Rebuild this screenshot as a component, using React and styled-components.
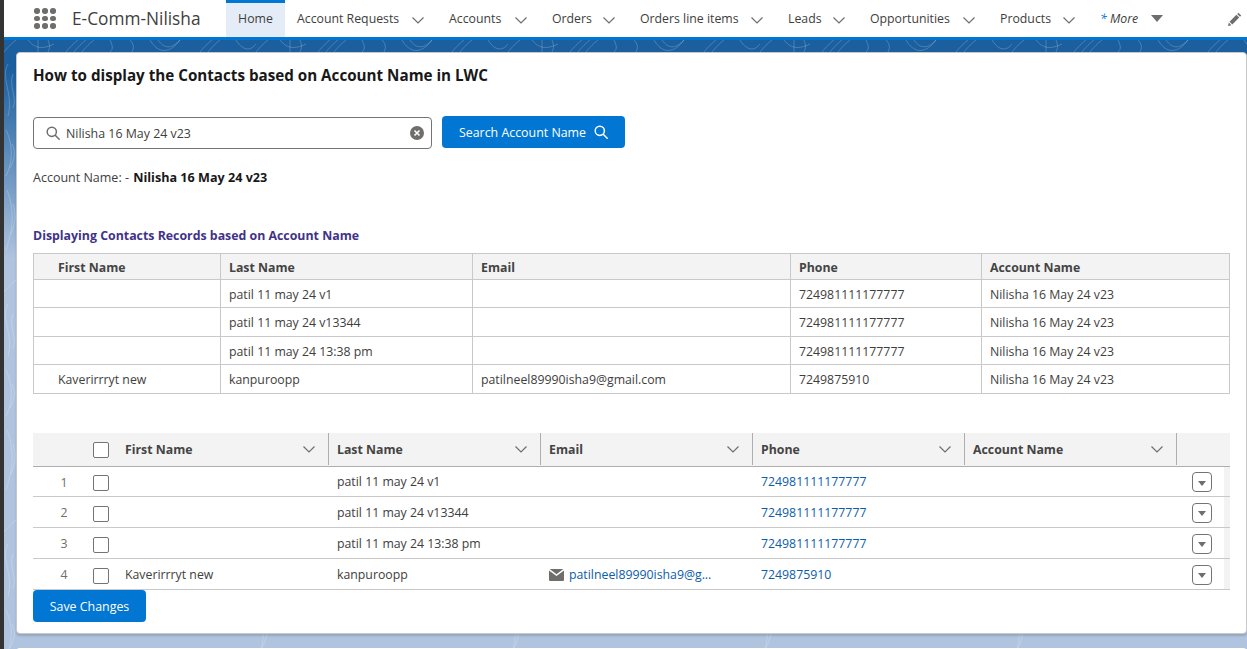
import React from 'react'
import styled, { createGlobalStyle } from 'styled-components'

const GlobalStyle = createGlobalStyle`
  html, body {
    margin: 0;
    height: 100%;
    overflow: hidden;
    background: #333;
  }
  body {
    font-family: "Open Sans", "Noto Sans", sans-serif;
    font-size: 12px;
    color: #3e3e3c;
  }
  * { box-sizing: border-box; }
`

const navItems = [
  { label: 'Account Requests', width: 152 },
  { label: 'Accounts', width: 103 },
  { label: 'Orders', width: 88 },
  { label: 'Orders line items', width: 148 },
  { label: 'Leads', width: 82 },
  { label: 'Opportunities', width: 130 },
  { label: 'Products', width: 100 },
]

const plainRows = [
  { first: '', last: 'patil 11 may 24 v1', email: '', phone: '724981111177777' },
  { first: '', last: 'patil 11 may 24 v13344', email: '', phone: '724981111177777' },
  { first: '', last: 'patil 11 may 24 13:38 pm', email: '', phone: '724981111177777' },
  { first: 'Kaverirrryt new', last: 'kanpuroopp', email: 'patilneel89990isha9@gmail.com', phone: '7249875910' },
]

const Chevron = ({ size = 14 }) => (
  <svg width={size} height={size} viewBox="0 0 14 14" fill="none" stroke="#706e6b" strokeWidth="1.2">
    <path d="M1.5 4.5 7 10l5.5-5.5" />
  </svg>
)

const SearchIcon = ({ color = '#706e6b' }) => (
  <svg width="14" height="14" viewBox="0 0 14 14" fill="none" stroke={color} strokeWidth="1.5">
    <circle cx="5.8" cy="5.8" r="4.6" />
    <path d="m9.2 9.2 4 4" strokeLinecap="round" />
  </svg>
)

const ClearIcon = () => (
  <svg width="14" height="14" viewBox="0 0 14 14">
    <circle cx="7" cy="7" r="7" fill="#706e6b" />
    <path d="m4.5 4.5 5 5m0-5-5 5" stroke="#fff" strokeWidth="1.6" />
  </svg>
)

const MailIcon = () => (
  <svg width="15" height="12" viewBox="0 0 15 12">
    <path d="M0 1.6 7.5 7 15 1.6V11a1 1 0 0 1-1 1H1a1 1 0 0 1-1-1z" fill="#706e6b" />
    <path d="M.6 0h13.8L7.5 5.2z" fill="#706e6b" />
  </svg>
)

const PencilIcon = () => (
  <svg width="14" height="14" viewBox="0 0 14 14" fill="#706e6b">
    <path d="M10.4.8 13.2 3.6 12 4.8 9.2 2zM8.4 2.8l2.8 2.8-6.9 6.9-2.8-2.8zM.8 10.6l2.6 2.6-3.4.8z" />
  </svg>
)

// topographic lines behind the page
const Contours = () => (
  <Backdrop width="100%" height="100%">
    <defs>
      <pattern id="contours" width="252" height="240" patternUnits="userSpaceOnUse">
        <g fill="none" stroke="#fff" strokeOpacity="0.2" strokeWidth="1">
          <path d="M0 12c4-5 8-9 12-12M24 0c6 8 14 10 26 4M34 0v12M44 0c2 5 2 8 0 12M62 12c4-5 8-9 12-12M70 12c4-5 8-9 12-12M78 12c4-5 8-9 12-12" />
          <path d="M106 0c4 8 2 10 0 12M126 0c4 4 4 8 2 12M146 0c8 14 20 14 30 0M154 0c6 9 14 9 22 0" />
          <path d="M196 12c4-5 8-9 12-12M204 12c4-5 8-9 12-12M232 0c6 10 14 12 20 4" />
          <path d="M4 24c-8 14 6 30 0 52M9 34c-5 12 5 24 0 34M2 90c6 12 8 30 0 46M8 104c4 8 3 14-2 24M3 150c6 16 8 34-1 60M9 164c3 10 3 18-2 30" />
        </g>
      </pattern>
    </defs>
    <rect width="100%" height="100%" fill="url(#contours)" />
  </Backdrop>
)

const App = () => {
  return (
    <>
      <GlobalStyle />
      <Shell>
        <Nav>
          <AppLauncher>
            {Array.from({ length: 9 }, (_, i) => <i key={i} />)}
          </AppLauncher>
          <AppName>E-Comm-Nilisha</AppName>
          <HomeTab>Home</HomeTab>
          {navItems.map((item) => (
            <NavItem key={item.label} $width={item.width}>
              {item.label}
              <Chevron />
            </NavItem>
          ))}
          <MoreItem>
            <em><b>*</b> More</em>
            <Caret />
          </MoreItem>
          <EditButton><PencilIcon /></EditButton>
        </Nav>
        <Page>
          <Contours />
          <Card>
            <Title>How to display the Contacts based on Account Name in LWC</Title>
            <SearchRow>
              <SearchBox>
                <SearchIcon />
                <SearchValue>Nilisha 16 May 24 v23</SearchValue>
                <ClearIcon />
              </SearchBox>
              <BrandButton>
                Search Account Name
                <SearchIcon color="#fff" />
              </BrandButton>
            </SearchRow>
            <AccountLine>Account Name: - <strong>Nilisha 16 May 24 v23</strong></AccountLine>
            <SectionTitle>Displaying Contacts Records based on Account Name</SectionTitle>
            <PlainTable>
              <colgroup>
                <col width="187" />
                <col width="252" />
                <col width="318" />
                <col width="191" />
                <col />
              </colgroup>
              <thead>
                <tr>
                  <th>First Name</th>
                  <th>Last Name</th>
                  <th>Email</th>
                  <th>Phone</th>
                  <th>Account Name</th>
                </tr>
              </thead>
              <tbody>
                {plainRows.map((row, i) => (
                  <tr key={i}>
                    <td>{row.first}</td>
                    <td>{row.last}</td>
                    <td>{row.email}</td>
                    <td>{row.phone}</td>
                    <td>Nilisha 16 May 24 v23</td>
                  </tr>
                ))}
              </tbody>
            </PlainTable>
            <DataTable>
              <colgroup>
                <col width="44" />
                <col width="40" />
                <col width="212" />
                <col width="212" />
                <col width="212" />
                <col width="212" />
                <col width="212" />
                <col />
              </colgroup>
              <thead>
                <tr>
                  <th />
                  <th><Checkbox /></th>
                  {['First Name', 'Last Name', 'Email', 'Phone', 'Account Name'].map((name) => (
                    <th key={name}>
                      <HeaderCell>
                        {name}
                        <Chevron />
                      </HeaderCell>
                    </th>
                  ))}
                  <th />
                </tr>
              </thead>
              <tbody>
                {plainRows.map((row, i) => (
                  <tr key={i}>
                    <RowNumber>{i + 1}</RowNumber>
                    <td><Checkbox $row /></td>
                    <td>{row.first}</td>
                    <td>{row.last}</td>
                    <td>
                      {row.email && (
                        <EmailLink><MailIcon /><a>patilneel89990isha9@g...</a></EmailLink>
                      )}
                    </td>
                    <td><a>{row.phone}</a></td>
                    <td />
                    <ActionCell><RowAction><Caret $small /></RowAction></ActionCell>
                  </tr>
                ))}
              </tbody>
            </DataTable>
            <SaveButton>Save Changes</SaveButton>
          </Card>
          <NextCard />
        </Page>
      </Shell>
    </>
  )
}

const Shell = styled.div`
  margin-left: 4px;
  height: 649px;
  display: flex;
  flex-direction: column;
  background: #fff;
`

const Nav = styled.nav`
  height: 40px;
  flex: none;
  display: flex;
  align-items: center;
  background: #fff;
  border-bottom: 3px solid #0176d3;
  font-size: 12.3px;
  color: #3e3e3c;
`

const AppLauncher = styled.div`
  width: 22px;
  margin-left: 30px;
  display: grid;
  grid-template-columns: repeat(3, 6px);
  gap: 2px;
  i {
    width: 5.5px;
    height: 5.5px;
    border-radius: 50%;
    background: #706e6b;
  }
`

const AppName = styled.div`
  width: 170px;
  padding-left: 16px;
  font-size: 17.3px;
  color: #3e3e3c;
  white-space: nowrap;
`

const HomeTab = styled.div`
  width: 59px;
  height: 40px;
  margin-bottom: -3px;
  display: flex;
  align-items: center;
  justify-content: center;
  padding-bottom: 3px;
  background: #e4edf7;
  border-top: 3px solid #0176d3;
  border-bottom: 3px solid #0176d3;
`

const NavItem = styled.div`
  width: ${(p) => p.$width}px;
  padding: 0 12px;
  display: flex;
  align-items: center;
  justify-content: space-between;
  white-space: nowrap;
  svg { margin-top: 2px; }
`

const MoreItem = styled.div`
  display: flex;
  align-items: center;
  gap: 13px;
  padding-left: 12px;
  white-space: nowrap;
  b { color: #0176d3; font-weight: 400; }
`

const Caret = styled.span`
  width: 0;
  height: 0;
  display: block;
  border-left: ${(p) => (p.$small ? 4 : 6)}px solid transparent;
  border-right: ${(p) => (p.$small ? 4 : 6)}px solid transparent;
  border-top: ${(p) => (p.$small ? 5 : 7)}px solid #706e6b;
  margin-top: ${(p) => (p.$small ? 2 : 0)}px;
`

const EditButton = styled.div`
  margin-left: auto;
  margin-right: 5px;
  display: flex;
`

const Page = styled.div`
  position: relative;
  flex: 1;
  min-height: 0;
  display: flex;
  flex-direction: column;
  padding: 12px 0 0 12px;
  background: linear-gradient(180deg, #1b5f9e 0, #1b5f9e 30px, #b0c4df 220px);
  overflow: hidden;
`

const Backdrop = styled.svg`
  position: absolute;
  inset: 0;
`

const Card = styled.div`
  position: relative;
  width: 1231px;
  height: 582px;
  flex: none;
  padding: 0 16px;
  background: #fff;
  border: 1px solid #c9c9c9;
  border-radius: 4px;
  box-shadow: 0 2px 2px rgba(0, 0, 0, 0.15);
`

const NextCard = styled.div`
  position: relative;
  width: 1231px;
  height: 20px;
  flex: none;
  margin-top: 14px;
  background: #fff;
  border-radius: 4px 4px 0 0;
`

const Title = styled.h1`
  margin: 0;
  height: 42px;
  padding-top: 11px;
  font-size: 15.2px;
  line-height: 22px;
  font-weight: 700;
  color: #181818;
`

const SearchRow = styled.div`
  margin-top: 21px;
  display: flex;
  align-items: flex-start;
  gap: 10px;
`

const SearchBox = styled.div`
  width: 399px;
  height: 32px;
  margin-top: 1px;
  padding: 0 7px 0 12px;
  display: flex;
  align-items: center;
  gap: 6px;
  border: 1px solid #747474;
  border-radius: 4px;
  font-size: 12.4px;
`

const SearchValue = styled.span`
  flex: 1;
`

const BrandButton = styled.div`
  width: 183px;
  height: 32px;
  display: flex;
  align-items: center;
  justify-content: center;
  gap: 8px;
  background: #0176d3;
  border-radius: 4px;
  color: #fff;
  font-size: 12.4px;
`

const AccountLine = styled.div`
  margin-top: 19px;
  line-height: 20px;
  font-size: 12.5px;
  strong {
    margin-left: 1px;
    font-size: 12.6px;
    font-weight: 700;
    color: #181818;
  }
`

const SectionTitle = styled.h2`
  margin: 38px 0 0;
  height: 27px;
  line-height: 20px;
  font-size: 12.35px;
  font-weight: 700;
  color: #3f3388;
`

const PlainTable = styled.table`
  width: 1197px;
  table-layout: fixed;
  border-collapse: collapse;
  font-size: 12.3px;
  th, td {
    padding: 2px 8px 0;
    text-align: left;
    border: 1px solid #c9c9c9;
    white-space: nowrap;
  }
  th {
    height: 26px;
    background: #f3f3f3;
    font-weight: 700;
    color: #444;
  }
  td { height: 28px; }
  tr:nth-child(even) td {
    height: 29px;
    padding-top: 0;
  }
  th:first-child, td:first-child { padding-left: 24px; }
`

const DataTable = styled.table`
  margin-top: 39px;
  width: 1197px;
  table-layout: fixed;
  border-collapse: collapse;
  font-size: 12.3px;
  th {
    height: 33px;
    padding: 0;
    background: #f3f3f3;
    border-bottom: 1px solid #aeaeae;
    text-align: left;
    font-weight: 700;
    color: #444;
  }
  td {
    height: 31px;
    padding: 2px 8px 0;
    border-bottom: 1px solid #c9c9c9;
    white-space: nowrap;
    position: relative;
  }
  tbody tr:first-child td {
    height: 30px;
    padding-top: 0;
  }
  td:nth-child(2), th:nth-child(2) { padding: 0 0 0 16px; }
  a { color: #0b5cab; }
`

const HeaderCell = styled.div`
  height: 32px;
  padding: 0 12px 0 8px;
  display: flex;
  align-items: center;
  justify-content: space-between;
  border-right: 1px solid #aeaeae;
`

const Checkbox = styled.span`
  display: block;
  width: 16px;
  height: 16px;
  border: 1px solid #747474;
  border-radius: 2px;
  background: #fff;
  margin-top: ${(p) => (p.$row ? 4 : 2)}px;
`

const RowNumber = styled.td`
  text-align: center;
  color: #706e6b;
  &&& { padding: 2px 0 0 18px; }
`

const EmailLink = styled.span`
  display: flex;
  align-items: center;
  gap: 5px;
`

const ActionCell = styled.td`
  background: linear-gradient(90deg, #fff 47px, #f3f3f3 47px);
  &&& { padding: 2px 8px 0; }
`

const RowAction = styled.span`
  display: flex;
  align-items: center;
  justify-content: center;
  width: 20px;
  height: 20px;
  margin-left: 7px;
  border: 1px solid #747474;
  border-radius: 4px;
  background: #fff;
`

const SaveButton = styled.div`
  width: 113px;
  height: 32px;
  padding-top: 1px;
  display: flex;
  align-items: center;
  justify-content: center;
  background: #0176d3;
  border-radius: 4px;
  color: #fff;
  font-size: 12.4px;
`

export default App
